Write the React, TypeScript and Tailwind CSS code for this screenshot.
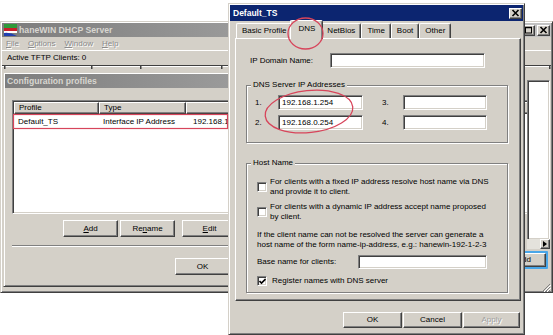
import React from "react";

const frame =
  "border border-t-[#d4d0c8] border-l-[#d4d0c8] border-r-[#404040] border-b-[#404040] shadow-[inset_1px_1px_0_#ffffff,inset_-1px_-1px_0_#808080]";
const raised =
  "bg-[#d4d0c8] border border-t-white border-l-white border-r-[#404040] border-b-[#404040] shadow-[inset_-1px_-1px_0_#808080]";
const sunken =
  "bg-white border border-t-[#808080] border-l-[#808080] border-r-white border-b-white shadow-[inset_1px_1px_0_#404040,inset_-1px_-1px_0_#d4d0c8]";
const etchedBox =
  "border border-[#808080] shadow-[inset_1px_1px_0_#ffffff,1px_1px_0_#ffffff]";

function CaptionBtn({ kind, className = "" }: { kind: "min" | "max" | "close"; className?: string }) {
  return (
    <div className={`w-[13px] h-[11px] flex items-center justify-center ${raised} ${className}`}>
      <svg width="9" height="8" viewBox="0 0 9 8">
        {kind === "close" && (
          <path d="M1.5 1 L7.5 7 M7.5 1 L1.5 7" stroke="#000" strokeWidth="1.6" />
        )}
        {kind === "max" && (
          <>
            <rect x="1.5" y="1.5" width="6" height="5.5" fill="none" stroke="#000" strokeWidth="1" />
            <line x1="1" y1="1.5" x2="8" y2="1.5" stroke="#000" strokeWidth="1.5" />
          </>
        )}
        {kind === "min" && <rect x="1.5" y="6" width="5" height="1.6" fill="#000" />}
      </svg>
    </div>
  );
}

function AppIcon() {
  return (
    <svg width="13" height="12" viewBox="0 0 13 12">
      <rect x="0" y="0" width="13" height="4" fill="#2e9a3a" />
      <rect x="0" y="4" width="13" height="3" fill="#c8202a" />
      <rect x="0" y="7" width="13" height="2" fill="#ffffff" />
      <path d="M0 9 Q6 8 13 12 L0 12 Z" fill="#2040b0" />
    </svg>
  );
}

function Checkbox({ checked = false }: { checked?: boolean }) {
  return (
    <div className={`w-[10px] h-[10px] shrink-0 flex items-center justify-center ${sunken}`}>
      {checked && (
        <svg width="7" height="7" viewBox="0 0 7 7">
          <path d="M0.5 3 L2.5 5 L6.5 1" fill="none" stroke="#000" strokeWidth="1.6" />
        </svg>
      )}
    </div>
  );
}

function Btn({ children, className = "", disabled = false }: { children: React.ReactNode; className?: string; disabled?: boolean }) {
  return (
    <div
      className={`flex items-center justify-center ${raised} ${className} ${
        disabled ? "text-[#a0a0a0] [text-shadow:1px_1px_0_#ffffff]" : ""
      }`}
    >
      {children}
    </div>
  );
}

function MainWindow() {
  return (
    <div className={`absolute left-0 top-[21px] w-[553px] h-[272px] p-[1px] flex flex-col bg-[#d4d0c8] ${frame}`}>
      {/* caption */}
      <div className="h-[14px] shrink-0 flex items-center bg-gradient-to-r from-[#7c7c7c] to-[#c4c4c4] pl-[2px] pr-[1px]">
        <AppIcon />
        <span className="ml-[2px] font-bold text-[8.7px] text-[#d8d6d0]">haneWIN DHCP Server</span>
        <div className="ml-auto flex items-center">
          <CaptionBtn kind="min" />
          <CaptionBtn kind="max" />
          <CaptionBtn kind="close" className="ml-[2px]" />
        </div>
      </div>
      {/* menu */}
      <div className="h-[13px] shrink-0 flex items-center gap-[9px] pl-[4px] text-[#8a8a8a] [text-shadow:1px_1px_0_#ffffff]">
        <span><u>F</u>ile</span>
        <span><u>O</u>ptions</span>
        <span><u>W</u>indow</span>
        <span><u>H</u>elp</span>
      </div>
      {/* toolbar text */}
      <div className="h-[14px] shrink-0 flex items-center pl-[5px] border-t border-t-white">
        Active TFTP Clients: 0
      </div>
      {/* ruler line */}
      <svg width="549" height="5" className="shrink-0">
        <line x1="0" y1="1.5" x2="549" y2="1.5" stroke="#404040" strokeWidth="1" />
        <line x1="0" y1="2.5" x2="549" y2="2.5" stroke="#ffffff" strokeWidth="1" />
        {[2, 89, 138, 219, 547].map((x) => (
          <rect key={x} x={x} y="1" width="1.5" height="4" fill="#404040" />
        ))}
      </svg>
      {/* MDI area */}
      <div className="flex-1 relative">
        <div className={`mt-[3px] ml-[1px] w-[518px] h-[215px] p-[1px] flex flex-col bg-[#d4d0c8] ${frame}`}>
          <div className="h-[14px] shrink-0 flex items-center pl-[2px] bg-gradient-to-r from-[#7e7e7e] to-[#c0c0c0]">
            <span className="font-bold text-[8.6px] text-[#d8d6d0]">Configuration profiles</span>
          </div>
          <div className="flex flex-col">
            {/* listview */}
            <div className={`ml-[7px] mt-[12px] w-[520px] h-[114px] ${sunken} p-[1px]`}>
              <div className="flex h-[12px]">
                <Btn className="w-[85px] !justify-start pl-[4px]">Profile</Btn>
                <Btn className="w-[87px] !justify-start pl-[4px]">Type</Btn>
                <Btn className="w-[120px]">{""}</Btn>
                <Btn className="flex-1">{""}</Btn>
              </div>
              <div className="flex h-[15px] items-center">
                <span className="w-[85px] pl-[4px]">Default_TS</span>
                <span className="w-[87px] pl-[4px]">Interface IP Address</span>
                <span className="pl-[7px]">192.168.1.254</span>
              </div>
            </div>
            {/* buttons */}
            <div className="flex mt-[6px] h-[17px]">
              <Btn className="ml-[58px] w-[55px]"><span><u>A</u>dd</span></Btn>
              <Btn className="ml-[2px] w-[55px]"><span>Re<u>n</u>ame</span></Btn>
              <Btn className="ml-[7px] w-[55px]"><span><u>E</u>dit</span></Btn>
            </div>
            <div className="ml-[7px] mt-[8px] w-[505px] border-t border-t-[#808080] border-b border-b-white" />
            <div className="flex mt-[11px] h-[17px]">
              <Btn className="ml-[170px] w-[55px]">OK</Btn>
            </div>
          </div>
        </div>
      </div>
      {/* right-hand remains of other panes */}
      <div className={`absolute left-[526px] top-[58px] w-[23px] h-[160px] ${sunken}`} />
      <div className="absolute left-[526px] top-[217px] w-[23px] h-[10px] bg-[#e4e2dc] flex justify-end">
        <div className={`w-[10px] h-[10px] flex items-center justify-center ${raised}`}>
          <svg width="4" height="6" viewBox="0 0 4 6">
            <path d="M0 0 L4 3 L0 6 Z" fill="#000" />
          </svg>
        </div>
      </div>
      <div className="absolute left-[505px] top-[229px] w-[42px] h-[18px] border-[2px] border-[#49a6e8] rounded-[1px]">
        <Btn className="w-full h-full !justify-end pr-[14px]">Add</Btn>
      </div>
      <svg className="absolute left-[541px] top-[261px]" width="9" height="9" viewBox="0 0 9 9">
        <path d="M8 1 L1 8 M8 4 L4 8 M8 7 L7 8" stroke="#808080" strokeWidth="1" />
        <path d="M9 2 L2 9 M9 5 L5 9" stroke="#ffffff" strokeWidth="1" />
      </svg>
    </div>
  );
}

function Tab({ label, selected = false }: { label: string; selected?: boolean }) {
  return (
    <div
      className={`flex items-center border-t border-l border-r border-t-white border-l-white border-r-[#404040] shadow-[inset_-1px_0_0_#808080] rounded-t-[2px] bg-[#d4d0c8] ${
        selected ? "relative z-10 h-[19px] -mb-[1px] -mx-[2px] px-[7px] pb-[2px]" : "h-[15px] px-[5px]"
      }`}
    >
      {label}
    </div>
  );
}

function Dialog() {
  return (
    <div className={`absolute left-[228px] top-[3px] w-[297px] h-[332px] p-[1px] flex flex-col bg-[#d4d0c8] ${frame}`}>
      <div className="h-[16px] shrink-0 flex items-center bg-[#0c2570] pl-[3px] pr-[1px]">
        <span className="font-bold text-[8.5px] text-white">Default_TS</span>
        <CaptionBtn kind="close" className="ml-auto" />
      </div>
      {/* tabs */}
      <div className="mt-[1px] ml-[6px] h-[16px] flex items-end">
        <Tab label="Basic Profile" />
        <Tab label="DNS" selected />
        <Tab label="NetBios" />
        <Tab label="Time" />
        <Tab label="Boot" />
        <Tab label="Other" />
      </div>
      {/* panel */}
      <div className="ml-[5px] w-[286px] h-[263px] flex flex-col border border-t-white border-l-white border-r-[#404040] border-b-[#404040] shadow-[inset_-1px_-1px_0_#808080]">
        <div className="mt-[14px] pl-[14px] flex items-center">
          <span className="w-[80px]">IP Domain Name:</span>
          <div className={`w-[155px] h-[15px] ${sunken}`} />
        </div>
        {/* DNS group */}
        <div className={`relative mt-[17px] ml-[10px] w-[262px] h-[58px] ${etchedBox}`}>
          <span className="absolute -top-[6px] left-[4px] px-[2px] bg-[#d4d0c8]">DNS Server IP Addresses</span>
          <div className="mt-[9px] pl-[8px] flex items-center">
            <span className="w-[23px]">1.</span>
            <div className={`w-[85px] h-[15px] flex items-center pl-[3px] ${sunken}`}>192.168.1.254</div>
            <span className="ml-[19px] w-[21px]">3.</span>
            <div className={`w-[84px] h-[15px] ${sunken}`} />
          </div>
          <div className="mt-[5px] pl-[8px] flex items-center">
            <span className="w-[23px]">2.</span>
            <div className={`w-[85px] h-[15px] flex items-center pl-[3px] ${sunken}`}>192.168.0.254</div>
            <span className="ml-[19px] w-[21px]">4.</span>
            <div className={`w-[84px] h-[15px] ${sunken}`} />
          </div>
        </div>
        {/* Host name group */}
        <div className={`relative mt-[20px] ml-[10px] w-[262px] h-[130px] ${etchedBox}`}>
          <span className="absolute -top-[6px] left-[4px] px-[2px] bg-[#d4d0c8]">Host Name</span>
          <div className="mt-[13px] pl-[10px] flex items-center gap-[3px]">
            <Checkbox />
            <span>
              For clients with a fixed IP address resolve host name via DNS
              <br />
              and provide it to client.
            </span>
          </div>
          <div className="mt-[5px] pl-[10px] flex items-center gap-[3px]">
            <Checkbox />
            <span>
              For clients with a dynamic IP address accept name proposed
              <br />
              by client.
            </span>
          </div>
          <p className="mt-[8px] pl-[10px]">
            If the client name can not be resolved the server can generate a
            <br />
            host name of the form name-ip-address, e.g.: hanewin-192-1-2-3
          </p>
          <div className="mt-[5px] pl-[10px] flex items-center h-[14px]">
            <span className="w-[101px]">Base name for clients:</span>
            <div className={`w-[129px] h-[14px] ${sunken}`} />
          </div>
          <div className="mt-[7px] pl-[10px] flex items-center gap-[5px] h-[10px]">
            <Checkbox checked />
            <span>Register names with DNS server</span>
          </div>
        </div>
      </div>
      {/* buttons */}
      <div className="mt-[11px] h-[16px] flex justify-end gap-[1px] pr-[3px]">
        <Btn className="w-[59px]">OK</Btn>
        <Btn className="w-[59px]">Cancel</Btn>
        <Btn className="w-[57px]" disabled>Apply</Btn>
      </div>
    </div>
  );
}

function Annotations() {
  return (
    <svg className="absolute left-0 top-0 pointer-events-none z-20" width="553" height="335" viewBox="0 0 553 335">
      <rect x="13.5" y="114.5" width="214" height="14" fill="none" stroke="#d7455b" strokeWidth="1.2" />
      <ellipse cx="305.5" cy="33.5" rx="17.5" ry="15.5" fill="none" stroke="#d7455b" strokeWidth="1.3" />
      <ellipse
        cx="309"
        cy="111.5"
        rx="44"
        ry="21"
        fill="none"
        stroke="#d7455b"
        strokeWidth="1.3"
        transform="rotate(-6 309 111.5)"
      />
    </svg>
  );
}

export default function App() {
  return (
    <div className="relative w-[553px] h-[335px] overflow-hidden bg-white font-['Liberation_Sans',Arial,sans-serif] text-[8px] leading-[10px] text-black">
      <MainWindow />
      <Dialog />
      <Annotations />
    </div>
  );
}
